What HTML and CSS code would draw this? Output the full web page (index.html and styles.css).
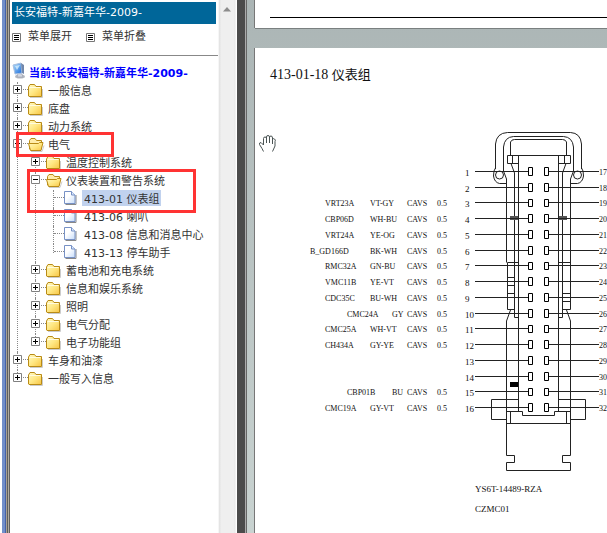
FILE: index.html
```html
<!DOCTYPE html>
<html lang="zh-CN">
<head>
<meta charset="utf-8">
<title>长安福特-新嘉年华-2009-</title>
<link rel="stylesheet" href="styles.css">
</head>
<body>
<svg class="defs" aria-hidden="true">
  <defs>
    <linearGradient id="gold" x1="0" y1="0" x2="1" y2="1"><stop offset="0" stop-color="#fff9c4"/><stop offset=".5" stop-color="#ffe884"/><stop offset="1" stop-color="#f7c545"/></linearGradient>
    <linearGradient id="paper" x1="0" y1="0" x2="1" y2="1"><stop offset=".4" stop-color="#fff"/><stop offset="1" stop-color="#c6dcfa"/></linearGradient>
    <linearGradient id="screen" x1="0" y1="0" x2="1" y2="1"><stop offset="0" stop-color="#b4e2ff"/><stop offset="1" stop-color="#1668d8"/></linearGradient>
    <symbol id="folder" viewBox="0 0 18 18"><path d="M2 15.500h12.500V7" fill="none" stroke="#ccc"/><path d="M.5 14V5L2 2.500h4.500l1.500 2h5.500V14.500H1z" fill="url(#gold)" stroke="#b98b16"/><path d="M1.500 5.500h11" stroke="#fffbe0"/></symbol>
    <symbol id="folder-open" viewBox="0 0 18 18"><path d="M3 15.500h11l2-6" fill="none" stroke="#ccc"/><path d="M1.500 13V4.500l1.500-2h4l1.500 2h5V13z" fill="#ffedaa" stroke="#b98b16"/><path d="M.5 7.500h10l1-1h3.500L13 14.500H2.500z" fill="url(#gold)" stroke="#b98b16"/></symbol>
    <symbol id="page" viewBox="0 0 18 18"><path d="M1.500 14.500h10.500V5" fill="none" stroke="#888"/><path d="M.5 1.500h7l3.500 3.500v8.500H.5z" fill="url(#paper)" stroke="#7791c5"/><path d="M7.500 1.500V5H11" fill="#dceaff" stroke="#7791c5"/></symbol>
    <symbol id="list" viewBox="0 0 9 9"><path d="M.5.5h8v8h-8z" fill="#fff" stroke="#777"/><path d="M2 2.500h5M2 4.500h5M2 6.500h5" stroke="#000"/></symbol>
    <symbol id="plus" viewBox="0 0 9 9"><path d="M.5.5h8v8h-8z" fill="#fff" stroke="#808080"/><path d="M2 4.500h5M4.500 2v5" stroke="#000"/></symbol>
    <symbol id="minus" viewBox="0 0 9 9"><path d="M.5.5h8v8h-8z" fill="#fff" stroke="#808080"/><path d="M2 4.500h5" stroke="#000"/></symbol>
  </defs>
</svg>

<div class="window-edge"></div>
<aside class="sidebar">
  <h1 class="title">长安福特-新嘉年华-2009-</h1>
  <div class="tools">
    <button type="button"><svg><use href="#list"/></svg>菜单展开</button>
    <button type="button"><svg><use href="#list"/></svg>菜单折叠</button>
  </div>
  <nav class="tree">
    <a class="root" href="#"><svg viewBox="0 0 15 17"><ellipse cx="8" cy="14.500" rx="5" ry="2" fill="#b8bcc4"/><path d="M6 11l4 1 1 3H5z" fill="#d2d5de" stroke="#8a90a0" stroke-width=".5"/><path d="M1 3l8-2 1 10-7 1z" fill="url(#screen)" stroke="#a8bfdf"/><path d="M9 1l3 2v9l-2-1z" fill="#7187ab"/><path d="M3 4l5-1-3 5z" fill="#e4f6ff" opacity=".7"/></svg>当前:长安福特-新嘉年华-2009-</a>
    <ul>
      <li><div class="row"><button type="button" aria-label="展开"><svg><use href="#plus"/></svg></button><svg class="icon"><use href="#folder"/></svg><a href="#">一般信息</a></div></li>
      <li><div class="row"><button type="button" aria-label="展开"><svg><use href="#plus"/></svg></button><svg class="icon"><use href="#folder"/></svg><a href="#">底盘</a></div></li>
      <li><div class="row"><button type="button" aria-label="展开"><svg><use href="#plus"/></svg></button><svg class="icon"><use href="#folder"/></svg><a href="#">动力系统</a></div></li>
      <li><div class="row"><button type="button" aria-label="折叠"><svg><use href="#minus"/></svg></button><svg class="icon"><use href="#folder-open"/></svg><a href="#">电气</a><span class="mark mark-section"></span></div>
        <ul>
          <li><div class="row"><button type="button" aria-label="展开"><svg><use href="#plus"/></svg></button><svg class="icon"><use href="#folder"/></svg><a href="#">温度控制系统</a></div></li>
          <li><div class="row"><button type="button" aria-label="折叠"><svg><use href="#minus"/></svg></button><svg class="icon"><use href="#folder-open"/></svg><a href="#">仪表装置和警告系统</a><span class="mark mark-item"></span></div>
            <ul>
              <li><div class="row leaf"><svg class="icon"><use href="#page"/></svg><a class="selected" href="#">413-01 仪表组</a></div></li>
              <li><div class="row leaf"><svg class="icon"><use href="#page"/></svg><a href="#">413-06 喇叭</a></div></li>
              <li><div class="row leaf"><svg class="icon"><use href="#page"/></svg><a href="#">413-08 信息和消息中心</a></div></li>
              <li><div class="row leaf"><svg class="icon"><use href="#page"/></svg><a href="#">413-13 停车助手</a></div></li>
            </ul>
          </li>
          <li><div class="row"><button type="button" aria-label="展开"><svg><use href="#plus"/></svg></button><svg class="icon"><use href="#folder"/></svg><a href="#">蓄电池和充电系统</a></div></li>
          <li><div class="row"><button type="button" aria-label="展开"><svg><use href="#plus"/></svg></button><svg class="icon"><use href="#folder"/></svg><a href="#">信息和娱乐系统</a></div></li>
          <li><div class="row"><button type="button" aria-label="展开"><svg><use href="#plus"/></svg></button><svg class="icon"><use href="#folder"/></svg><a href="#">照明</a></div></li>
          <li><div class="row"><button type="button" aria-label="展开"><svg><use href="#plus"/></svg></button><svg class="icon"><use href="#folder"/></svg><a href="#">电气分配</a></div></li>
          <li><div class="row"><button type="button" aria-label="展开"><svg><use href="#plus"/></svg></button><svg class="icon"><use href="#folder"/></svg><a href="#">电子功能组</a></div></li>
        </ul>
      </li>
      <li><div class="row"><button type="button" aria-label="展开"><svg><use href="#plus"/></svg></button><svg class="icon"><use href="#folder"/></svg><a href="#">车身和油漆</a></div></li>
      <li><div class="row"><button type="button" aria-label="展开"><svg><use href="#plus"/></svg></button><svg class="icon"><use href="#folder"/></svg><a href="#">一般写入信息</a></div></li>
    </ul>
  </nav>
</aside>
<div class="scrollbar"><svg viewBox="0 0 8 5"><path d="M0 4.500L4 0l4 4.500z" fill="#8c8c8c"/></svg></div>
<div class="splitter"></div>

<main class="viewer">
  <section class="sheet previous"><hr></section>
  <section class="sheet current">
    <h2><span>413-01-18 </span>仪表组</h2>
    <div class="connector">
      <table class="pins wires">
        <colgroup><col class="wire"><col class="color"><col class="type"><col class="size"><col class="pin"></colgroup>
        <tbody>
        <tr><td></td><td></td><td></td><td></td><th>1</th></tr>
        <tr><td></td><td></td><td></td><td></td><th>2</th></tr>
        <tr><td>VRT23A</td><td>VT-GY</td><td>CAVS</td><td>0.5</td><th>3</th></tr>
        <tr><td>CBP06D</td><td>WH-BU</td><td>CAVS</td><td>0.5</td><th>4</th></tr>
        <tr><td>VRT24A</td><td>YE-OG</td><td>CAVS</td><td>0.5</td><th>5</th></tr>
        <tr class="ground"><td>B_GD166D</td><td>BK-WH</td><td>CAVS</td><td>0.5</td><th>6</th></tr>
        <tr><td>RMC32A</td><td>GN-BU</td><td>CAVS</td><td>0.5</td><th>7</th></tr>
        <tr><td>VMC11B</td><td>YE-VT</td><td>CAVS</td><td>0.5</td><th>8</th></tr>
        <tr><td>CDC35C</td><td>BU-WH</td><td>CAVS</td><td>0.5</td><th>9</th></tr>
        <tr class="single"><td>CMC24A</td><td>GY</td><td>CAVS</td><td>0.5</td><th>10</th></tr>
        <tr><td>CMC25A</td><td>WH-VT</td><td>CAVS</td><td>0.5</td><th>11</th></tr>
        <tr><td>CH434A</td><td>GY-YE</td><td>CAVS</td><td>0.5</td><th>12</th></tr>
        <tr><td></td><td></td><td></td><td></td><th>13</th></tr>
        <tr><td></td><td></td><td></td><td></td><th>14</th></tr>
        <tr class="single"><td>CBP01B</td><td>BU</td><td>CAVS</td><td>0.5</td><th>15</th></tr>
        <tr><td>CMC19A</td><td>GY-VT</td><td>CAVS</td><td>0.5</td><th>16</th></tr>
        </tbody>
      </table>
      <figure>
        <svg class="drawing" viewBox="475 130 124 345" fill="none" stroke="#222" role="img" aria-label="YS6T-14489-RZA">
          <path d="M495.500 169V144Q496.500 133 507.500 132.500H570.500Q580.500 133 581.500 144V169"/>
          <path d="M503.500 172V147Q504.500 137 513.500 136.500H563.500Q572.500 137 573.500 147V172"/>
          <path d="M510.500 155.500V142Q511.500 139.500 514.500 139.500H562.500Q565.500 139.500 566.500 142V155.500"/>
          <path d="M507.500 155.500H570.500V163.500H558.500M507.500 155.500V163.500H518.500M512.500 155.500V163.500M564.500 155.500V163.500"/>
          <path d="M518.500 155.500V411.500M558.500 155.500V411.500"/>
          <path d="M511 163.500L514.500 173V317.500H518.500M566 163.500L562.500 173V317.500H558.500"/>
          <circle cx="499.500" cy="175" r="4"/><circle cx="577.500" cy="175" r="4"/>
          <path d="M495.500 168Q493.500 170 493.500 176Q494.500 182.500 499.500 183.500H506.500M581.500 168Q583.500 170 583.500 176Q582.500 182.500 577.500 183.500H570.500"/>
          <path d="M503.500 171L506.500 179V262.500M573.500 171L570.500 179V309.500"/>
          <path d="M518.500 262.500H507.500V309.500H514.500M507.500 277.500H514.500M507.500 285.500H514.500M507.500 293.500H514.500"/>
          <path d="M558.500 262.500H570.500M562.500 293.500H570.500M562.500 301.500H570.500M562.500 309.500H570.500"/>
          <path d="M510.500 310L506.500 321V455.500H514.500V462.500H506.500V470.500H570.500V462.500H562.500V455.500H570.500V321L566.500 310"/>
          <path d="M518.500 399.500H491.500V419.500H506.500M558.500 399.500H585.500V419.500H570.500"/>
          <path d="M506.500 411.500H522.500V415.500H554.500V411.500H570.500M510.500 411.500V423.500M566.500 411.500V423.500M506.500 423.500H570.500"/>
          <path d="M510 216h8v4h-8zM559 216h8v4h-8z" fill="#555" stroke="none"/>
          <path d="M510 382h8v5h-8z" fill="#000" stroke="none"/>
          <path d="M475 171.500h53m21 0h51M475 187.500h53m21 0h51M475 202.500h53m21 0h51M475 218.500h53m21 0h51M475 234.500h53m21 0h51M475 250.500h53m21 0h51M475 265.500h53m21 0h51M475 281.500h53m21 0h51M475 297.500h53m21 0h51M475 313.500h53m21 0h51M475 328.500h53m21 0h51M475 344.500h53m21 0h51M475 360.500h53m21 0h51M475 376.500h53m21 0h51M475 391.500h53m21 0h51M475 407.500h53m21 0h51"/>
          <path stroke="#000" d="M528.500 167.500h4v8h-4zm16 0h4v8h-4zM528.500 183.500h4v8h-4zm16 0h4v8h-4zM528.500 199.500h4v7h-4zm16 0h4v7h-4zM528.500 214.500h4v8h-4zm16 0h4v8h-4zM528.500 230.500h4v8h-4zm16 0h4v8h-4zM528.500 246.500h4v8h-4zm16 0h4v8h-4zM528.500 262.500h4v7h-4zm16 0h4v7h-4zM528.500 277.500h4v8h-4zm16 0h4v8h-4zM528.500 293.500h4v8h-4zm16 0h4v8h-4zM528.500 309.500h4v8h-4zm16 0h4v8h-4zM528.500 325.500h4v7h-4zm16 0h4v7h-4zM528.500 340.500h4v8h-4zm16 0h4v8h-4zM528.500 356.500h4v8h-4zm16 0h4v8h-4zM528.500 372.500h4v8h-4zm16 0h4v8h-4zM528.500 388.500h4v7h-4zm16 0h4v7h-4zM528.500 403.500h4v8h-4zm16 0h4v8h-4z"/>
        </svg>
        <figcaption><span>YS6T-14489-RZA</span><span>CZMC01</span></figcaption>
      </figure>
      <table class="pins far">
        <tbody><tr><th>17</th></tr><tr><th>18</th></tr><tr><th>19</th></tr><tr><th>20</th></tr><tr><th>21</th></tr><tr><th>22</th></tr><tr><th>23</th></tr><tr><th>24</th></tr><tr><th>25</th></tr><tr><th>26</th></tr><tr><th>27</th></tr><tr><th>28</th></tr><tr><th>29</th></tr><tr><th>30</th></tr><tr><th>31</th></tr><tr><th>32</th></tr></tbody>
      </table>
    </div>
    <svg class="hand" viewBox="0 0 17 17"><path d="M4.500 16.500L3 13.500.5 9.500Q0 7.500 2 7.500L4.500 10V3.500Q4.500 2 6 2T7.500 3.500V8 2Q7.500.5 9 .5T10.500 2V8 2.500Q10.500 1 12 1T13.500 3V9 4.500Q14 3 15.500 4T16 6.500V11L13.500 16.500" fill="#fff" stroke="#4b5454"/></svg>
  </section>
</main>
</body>
</html>
```
FILE: styles.css
```css
* { box-sizing: border-box; }
body {
  margin: 0;
  display: flex;
  height: 100vh;
  overflow: hidden;
  background: #fff;
  color: #333;
  font: 11px/18px "DejaVu Sans", "Noto Sans CJK SC", sans-serif;
}
svg { display: block; flex: none; }
a { color: inherit; text-decoration: none; }
button {
  display: flex;
  align-items: center;
  padding: 0;
  border: 0;
  background: none;
  color: inherit;
  font: inherit;
}
.defs { position: absolute; width: 0; height: 0; }

.window-edge {
  flex: none;
  width: 10px;
  background: linear-gradient(to right, #fff 2px, #728fc9 2px 5px, #4562ab 5px 6px, #a6a093 6px 7px, #5e5e5e 7px 8px, #b0aba0 8px 9px, #606060 9px);
}
.sidebar { flex: none; width: 208px; }
.title {
  margin: 2px 2px 0;
  padding: 0 2px;
  background: #069;
  color: #fff;
  font-size: 11px;
  font-weight: 400;
  line-height: 22px;
}
.tools {
  display: flex;
  gap: 14px;
  height: 32px;
  padding: 3px 2px 8px;
  border-bottom: 1px solid #888;
}
.tools button { gap: 7px; }
.tools svg { width: 9px; height: 9px; }

.tree { padding-top: 6px; }
.root {
  display: flex;
  gap: 2px;
  height: 20px;
  padding-left: 2px;
  color: #00f;
  font-weight: 700;
  line-height: 24px;
  white-space: nowrap;
}
.root svg { width: 15px; height: 17px; }
.tree ul { margin: 0; padding: 0; list-style: none; }
.tree ul ul { padding-left: 18px; }
.tree li { position: relative; }
.tree li::before {
  content: "";
  position: absolute;
  top: 0;
  bottom: 0;
  left: 7px;
  border-left: 1px dotted #888;
}
.tree li:last-child::before { bottom: auto; height: 9px; }
.row { position: relative; display: flex; height: 18px; }
.row::before {
  content: "";
  position: absolute;
  top: 7px;
  left: 8px;
  width: 10px;
  border-top: 1px dotted #888;
}
.row button { position: relative; width: 18px; height: 15px; padding-left: 3px; }
.row button svg { width: 9px; height: 9px; }
.row .icon { width: 18px; height: 18px; }
.leaf { padding-left: 18px; }
.row a { padding: 0 2px; line-height: 20px; white-space: nowrap; }
.row .selected { height: 16px; background: #c1d2ee; }
.mark { position: absolute; z-index: 1; border: 3px solid #f33; pointer-events: none; }
.mark-section { top: -4px; left: 6px; width: 98px; height: 25px; }
.mark-item { top: -3px; left: -1px; width: 169px; height: 44px; }

.scrollbar {
  flex: none;
  width: 19px;
  padding: 7px 5px;
  background: linear-gradient(to right, #f6f6f6 1px, #e4e4e4 1px 2px, #efefef 3px 16px, #e6e6e6 17px, #fff 18px);
}
.scrollbar svg { width: 8px; height: 5px; }
.splitter {
  flex: none;
  width: 10px;
  background: linear-gradient(to right, #4b4b4b 8px, #aaa 8px 9px, #666 9px);
}

.viewer {
  flex: 1;
  min-width: 0;
  display: flex;
  flex-direction: column;
  gap: 20px;
  padding-left: 8px;
  background: linear-gradient(#abb5b5, #c9d3d1);
}
.sheet { background: #fff; box-shadow: -1px 0 #777, 0 1px #7a8080; }
.previous { height: 28px; padding: 17px 0 0 15px; }
.previous hr { height: 1px; margin: 0; border: 0; background: #000; }
.current {
  position: relative;
  flex: 1;
  overflow: hidden;
  color: #111;
  font-family: "Liberation Serif", "Noto Sans CJK SC", serif;
}
.current h2 {
  margin: 17px 0 35px 15px;
  font-size: 13px;
  font-weight: 400;
  line-height: 20px;
  white-space: pre;
}
.current h2 span { font-size: 14px; }
.connector { display: flex; align-items: flex-start; padding: 10px 0 0 55px; }
.pins {
  flex: none;
  height: 252px;
  margin-top: 35px;
  border-collapse: collapse;
  font-size: 8px;
  line-height: 14px;
}
.pins td, .pins th { padding: 0; text-align: left; font-weight: 400; white-space: nowrap; }
.wires { table-layout: fixed; width: 165px; }
.wires th { font-size: 9px; }
.wire { width: 60px; }
.color { width: 37px; }
.type { width: 30px; }
.size { width: 28px; }
.pin { width: 10px; }
.wires td:first-child { padding-left: 15px; }
.wires .ground td:first-child { padding-left: 0; }
.wires .single td:first-child { padding-left: 37px; }
.wires .single td:nth-child(2) { padding-left: 22px; }
figure { flex: none; margin: 0; }
.drawing { width: 124px; height: 345px; }
figcaption { display: grid; font-size: 9px; line-height: 20px; margin-top: 4px; }
.hand { position: absolute; top: 87px; left: 4px; width: 17px; height: 17px; }
```
